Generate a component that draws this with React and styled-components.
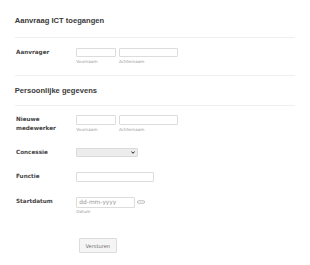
import React from "react";
import styled, { createGlobalStyle } from "styled-components";

const GlobalStyle = createGlobalStyle`
  body {
    margin: 0;
    background: #fff;
  }
`;

// Styled Components
const Page = styled.div`
  width: 310px;
  padding: 15px 15px 0 14.7px;
  box-sizing: border-box;
  font-family: "DejaVu Sans", Verdana, sans-serif;
`;

const SectionHeading = styled.h2`
  margin: 0;
  font-family: "Liberation Sans", Arial, sans-serif;
  font-size: 7.6px;
  line-height: 10px;
  font-weight: 700;
  color: #3a3a3a;
  padding-top: ${(props) => props.$top || 0}px;
`;

const Divider = styled.div`
  height: 1px;
  background: #efefef;
  margin: ${(props) => props.$above}px 0 ${(props) => props.$below}px;
`;

const Row = styled.div`
  display: flex;
  align-items: flex-start;
  margin-bottom: ${(props) => props.$gap ?? 15}px;
`;

const Label = styled.div`
  width: 61.6px;
  flex-shrink: 0;
  padding-left: 1.3px;
  box-sizing: border-box;
  font-size: 5.7px;
  line-height: 8.4px;
  font-weight: 700;
  color: #444;
`;

const Fields = styled.div`
  display: flex;
  gap: 2.7px;
  align-items: flex-start;
`;

const Field = styled.div`
  display: flex;
  flex-direction: column;
`;

const TextInput = styled.input`
  width: ${(props) => props.$w}px;
  height: ${(props) => props.$h || 9.6}px;
  box-sizing: border-box;
  margin: 0;
  padding: 0 2px;
  border: 1px solid #dcdcdc;
  border-radius: 1px;
  background: #fff;
  font-family: "DejaVu Sans", Verdana, sans-serif;
  font-size: 5.9px;
  color: #555;
  outline: none;

  &::placeholder {
    color: #999;
  }
`;

const SubLabel = styled.span`
  margin-top: 2.2px;
  font-size: 4.2px;
  line-height: 5px;
  color: #9a9a9a;
`;

const SelectBox = styled.div`
  width: 62px;
  height: 9px;
  box-sizing: border-box;
  border: 1px solid #dadada;
  border-radius: 1px;
  background: #ededed;
  display: flex;
  align-items: center;
  justify-content: flex-end;
  padding-right: 2.5px;
`;

const DateWrap = styled.div`
  display: flex;
  align-items: center;
  gap: 2px;
`;

const Button = styled.button`
  margin: 4px 0 0 2.7px;
  width: 37.7px;
  height: 14.7px;
  padding: 0;
  border: 1px solid #dcdcdc;
  border-radius: 1px;
  background: #f5f5f5;
  font-family: "DejaVu Sans", Verdana, sans-serif;
  font-size: 5.1px;
  color: #6a6a6a;
`;

const Chevron = () => (
  <svg width="4" height="3" viewBox="0 0 4 3">
    <path d="M0.4 0.5 L2 2.3 L3.6 0.5" fill="none" stroke="#222" strokeWidth="1" />
  </svg>
);

const CalendarIcon = () => (
  <svg width="8" height="4" viewBox="0 0 8 4">
    <rect x="0.5" y="0.8" width="7" height="2.4" rx="1" fill="none" stroke="#aaa" strokeWidth="0.8" />
  </svg>
);

const NameFields = () => (
  <Fields>
    <Field>
      <TextInput $w={40} />
      <SubLabel>Voornaam</SubLabel>
    </Field>
    <Field>
      <TextInput $w={59} />
      <SubLabel>Achternaam</SubLabel>
    </Field>
  </Fields>
);

const App = () => {
  return (
    <Page>
      <GlobalStyle />
      <SectionHeading $top={1}>Aanvraag ICT toegangen</SectionHeading>
      <Divider $above={11} $below={9.7} />
      <Row $gap={0}>
        <Label style={{ paddingTop: 0 }}>Aanvrager</Label>
        <NameFields />
      </Row>
      <Divider $above={10.8} $below={9.7} />
      <SectionHeading>Persoonlijke gegevens</SectionHeading>
      <Divider $above={9.3} $below={9} />
      <Row $gap={15.8}>
        <Label>
          Nieuwe
          <br />
          medewerker
        </Label>
        <NameFields />
      </Row>
      <Row>
        <Label>Concessie</Label>
        <SelectBox>
          <Chevron />
        </SelectBox>
      </Row>
      <Row>
        <Label>Functie</Label>
        <TextInput $w={77.4} $h={10} />
      </Row>
      <Row $gap={20}>
        <Label>Startdatum</Label>
        <Field>
          <DateWrap>
            <TextInput $w={58.7} $h={11} placeholder="dd-mm-yyyy" />
            <CalendarIcon />
          </DateWrap>
          <SubLabel style={{ marginTop: 1.5 }}>Datum</SubLabel>
        </Field>
      </Row>
      <Row>
        <Label />
        <Button>Versturen</Button>
      </Row>
    </Page>
  );
};

export default App;
